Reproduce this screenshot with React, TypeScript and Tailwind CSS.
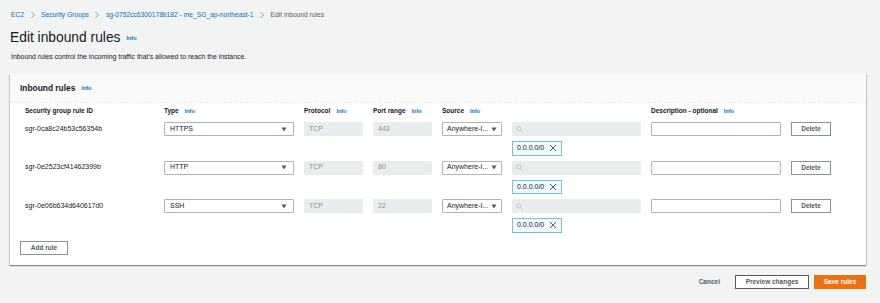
import React from "react";

const rules = [
  { id: "sgr-0ca8c24b53c56354b", type: "HTTPS", port: "443" },
  { id: "sgr-0e2523cf41462399b", type: "HTTP", port: "80" },
  { id: "sgr-0e06b634d640617d0", type: "SSH", port: "22" },
];

const Info = () => (
  <span className="ml-[6px] text-[5.5px] font-bold text-[#0073bb]">Info</span>
);

const Caret = () => (
  <svg width="6" height="5" viewBox="0 0 6 5" className="shrink-0">
    <path d="M0.5 0.5h5L3 4.5z" fill="#545b64" />
  </svg>
);

const Chevron = () => (
  <svg width="6" height="8" viewBox="0 0 6 8" className="mx-[5.5px]">
    <path d="M1.5 1l3 3-3 3" stroke="#879596" strokeWidth="0.9" fill="none" />
  </svg>
);

const Label = ({ children }: { children: React.ReactNode }) => (
  <div className="flex h-[10px] items-center whitespace-nowrap text-[6.5px] font-bold text-[#16191f]">
    {children}
  </div>
);

const cols = "grid grid-cols-[129px_130px_59px_59px_60px_129px_130px_40px] gap-x-[10px]";

export default function App() {
  return (
    <div
      className="min-h-[303px] w-[880px] bg-[#f2f3f3] pl-[10px] pr-[14px] pt-[10px] text-[#16191f]"
      style={{ fontFamily: '"Liberation Sans", Arial, sans-serif' }}
    >
      {/* breadcrumb */}
      <div className="flex h-[10px] items-center pl-[1px] text-[6.7px]">
        <span className="text-[#0073bb]">EC2</span>
        <Chevron />
        <span className="text-[#0073bb]">Security Groups</span>
        <Chevron />
        <span className="text-[#0073bb]">sg-0752cc6300178b182 - me_SG_ap-northeast-1</span>
        <Chevron />
        <span className="text-[#545b64]">Edit inbound rules</span>
      </div>

      <div className="mt-[8px] flex h-[20px] items-center">
        <h1 className="text-[13.8px] leading-none text-[#16191f]">Edit inbound rules</h1>
        <Info />
      </div>
      <p className="mt-[4px] h-[9px] pl-[1px] text-[6.9px] leading-[9px] text-[#16191f]">
        Inbound rules control the incoming traffic that's allowed to reach the instance.
      </p>

      {/* panel */}
      <div className="mt-[13px] bg-white shadow-[0_1px_1px_0_rgba(0,28,36,0.3),1px_1px_1px_0_rgba(0,28,36,0.15),-1px_1px_1px_0_rgba(0,28,36,0.15)]">
        <div className="flex h-[29px] items-center border-b border-dashed border-[#eaeded] bg-[#fafafa] px-[10px]">
          <span className="text-[8.4px] font-bold">Inbound rules</span>
          <Info />
        </div>

        <div className="px-[15px] pt-[3px]">
          <div className={cols}>
            <Label>Security group rule ID</Label>
            <Label>Type<Info /></Label>
            <Label>Protocol<Info /></Label>
            <Label>Port range<Info /></Label>
            <Label>Source<Info /></Label>
            <div />
            <Label>Description - optional<Info /></Label>
            <div />
          </div>

          <div className="mt-[6px] flex flex-col gap-y-[5px]">
            {rules.map((r) => (
              <div key={r.id} className={`${cols} text-[7px]`}>
                <div className="flex h-[14px] items-center">{r.id}</div>
                <div className="flex h-[14px] items-center justify-between rounded-[1px] border border-[#aab7b8] bg-white pl-[5px] pr-[6px]">
                  <span>{r.type}</span>
                  <Caret />
                </div>
                <div className="flex h-[14px] items-center rounded-[1px] bg-[#eaeded] pl-[5px] text-[#879596]">TCP</div>
                <div className="flex h-[14px] items-center rounded-[1px] bg-[#eaeded] pl-[5px] text-[#879596]">{r.port}</div>
                <div className="flex h-[14px] items-center justify-between rounded-[1px] border border-[#aab7b8] bg-white pl-[4px] pr-[4px]">
                  <span className="whitespace-nowrap">Anywhere-I...</span>
                  <Caret />
                </div>
                <div className="flex flex-col items-start">
                  <div className="flex h-[14px] w-full items-center rounded-[1px] bg-[#eaeded] pl-[4px]">
                    <svg width="7" height="7" viewBox="0 0 8 8">
                      <circle cx="3.3" cy="3.3" r="2.4" stroke="#aab7b8" strokeWidth="0.8" fill="none" />
                      <path d="M5.1 5.1l2.2 2.2" stroke="#aab7b8" strokeWidth="0.8" />
                    </svg>
                  </div>
                  <div className="mt-[5px] flex h-[14.5px] items-center gap-[5px] border border-[#70c4dc] bg-[#f1faff] pl-[4px] pr-[4px]">
                    <span>0.0.0.0/0</span>
                    <svg width="8" height="8" viewBox="0 0 8 8">
                      <path d="M1 1l6 6M7 1l-6 6" stroke="#545b64" strokeWidth="1" />
                    </svg>
                  </div>
                </div>
                <div className="h-[14px] rounded-[1px] border border-[#aab7b8] bg-white" />
                <div className="flex h-[14px] items-center justify-center border border-[#879596] bg-white text-[6.5px] font-bold text-[#545b64]">
                  Delete
                </div>
              </div>
            ))}
          </div>

          <div className="pb-[10px] pt-[8px]">
            <div className="-ml-[5px] flex h-[14px] w-[48px] items-center justify-center border border-[#879596] bg-white text-[6.5px] font-bold text-[#545b64]">
              Add rule
            </div>
          </div>
        </div>
      </div>

      {/* footer */}
      <div className="mt-[10px] flex items-center justify-end">
        <span className="mr-[15px] text-[6.5px] font-bold text-[#545b64]">Cancel</span>
        <div className="flex h-[14px] w-[74px] items-center justify-center border border-[#545b64] bg-white text-[6.5px] font-bold text-[#545b64]">
          Preview changes
        </div>
        <div className="ml-[5px] flex h-[14px] w-[52px] items-center justify-center border border-[#ec7211] bg-[#ec7211] text-[6.5px] font-bold text-white">
          Save rules
        </div>
      </div>
    </div>
  );
}
